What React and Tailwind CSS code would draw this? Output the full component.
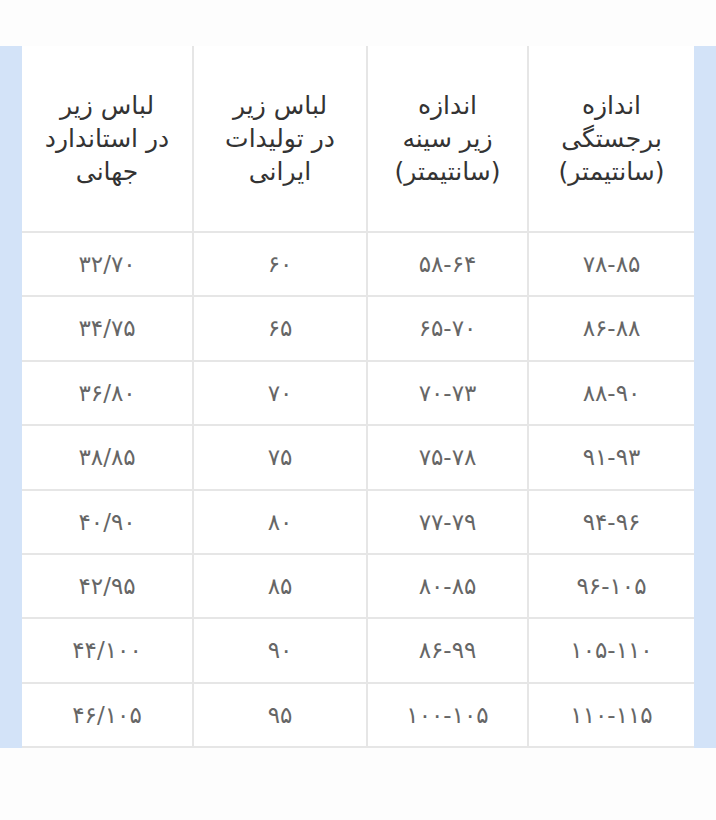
import React from 'react'

// ستون‌ها از راست به چپ
const headers = [
  ['اندازه', 'برجستگی', '(سانتیمتر)'],
  ['اندازه', 'زیر سینه', '(سانتیمتر)'],
  ['لباس زیر', 'در تولیدات', 'ایرانی'],
  ['لباس زیر', 'در استاندارد', 'جهانی'],
]

const rows = [
  ['۷۸-۸۵', '۵۸-۶۴', '۶۰', '۳۲/۷۰'],
  ['۸۶-۸۸', '۶۵-۷۰', '۶۵', '۳۴/۷۵'],
  ['۸۸-۹۰', '۷۰-۷۳', '۷۰', '۳۶/۸۰'],
  ['۹۱-۹۳', '۷۵-۷۸', '۷۵', '۳۸/۸۵'],
  ['۹۴-۹۶', '۷۷-۷۹', '۸۰', '۴۰/۹۰'],
  ['۹۶-۱۰۵', '۸۰-۸۵', '۸۵', '۴۲/۹۵'],
  ['۱۰۵-۱۱۰', '۸۶-۹۹', '۹۰', '۴۴/۱۰۰'],
  ['۱۱۰-۱۱۵', '۱۰۰-۱۰۵', '۹۵', '۴۶/۱۰۵'],
]

const cols = 'grid grid-cols-[167px_161px_174px_170px]'

const App = () => {
  return (
    <div className="w-[716px] h-[820px] bg-[#fdfdfd] font-['DejaVu_Sans',sans-serif]">
      <div className="h-[46px]" />
      <div className="flex">
        {/* نوار آبی چپ */}
        <div className="w-[22px] bg-[#d3e3f8]" />

        <div dir="rtl" className="w-[672px] bg-white">
          {/* سرستون‌ها */}
          <div className={`${cols} h-[187px] border-b-2 border-[#e6e6e6]`}>
            {headers.map((lines, i) => (
              <div
                key={i}
                className={`flex flex-col items-center justify-center text-[25px] leading-[33px] text-[#333333] ${i < 3 ? 'border-l-2 border-[#e6e6e6]' : ''}`}
              >
                {lines.map((l, j) => (
                  <span key={j}>{l}</span>
                ))}
              </div>
            ))}
          </div>

          {rows.map((row, r) => (
            <div key={r} className={`${cols} h-[64.4px] border-b-2 border-[#e6e6e6]`}>
              {row.map((v, i) => (
                <div
                  key={i}
                  className={`flex items-center justify-center text-[23px] tracking-[1.5px] text-[#666666] ${i < 3 ? 'border-l-2 border-[#e6e6e6]' : ''}`}
                >
                  <span dir="ltr">{v}</span>
                </div>
              ))}
            </div>
          ))}
        </div>

        {/* نوار آبی راست */}
        <div className="w-[22px] bg-[#d3e3f8]" />
      </div>
    </div>
  )
}

export default App
